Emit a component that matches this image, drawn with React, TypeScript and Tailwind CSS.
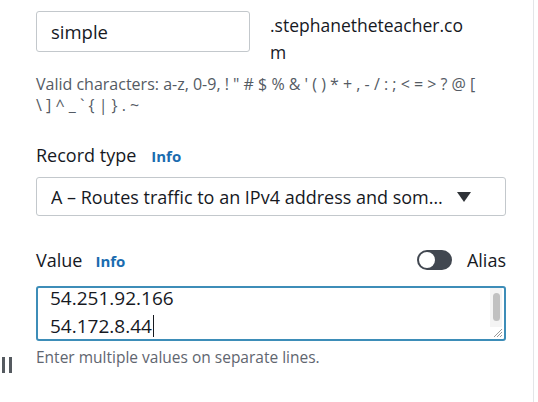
import React from "react";

export default function App() {
  return (
    <div
      className="w-[538px] h-[402px] bg-white overflow-hidden flex text-[#16191f]"
      style={{ fontFamily: "'Open Sans', 'Noto Sans', sans-serif" }}
    >
      <div className="w-[534px] h-full border-r border-[#e3e5e8] flex flex-col">
        <div className="flex flex-1">
          <div className="w-[36px] flex flex-col justify-end pb-[29px] pl-[2px]">
            <div className="flex gap-[4px] h-[16px]">
              <div className="w-[3px] h-full bg-[#555a60]" />
              <div className="w-[3px] h-full bg-[#555a60]" />
            </div>
          </div>
          <div className="w-[470px] flex flex-col pt-[11px]">
            {/* Name row */}
            <div className="flex items-start">
              <div className="w-[214px] h-[41px] border border-[#c3c8cc] rounded-[3px] flex items-center pl-[14px] text-[18.5px] leading-[24px]">
                simple
              </div>
              <div className="ml-[20px] text-[17.5px] leading-[27px] pt-[1px]">
                <div>.stephanetheteacher.co</div>
                <div>m</div>
              </div>
            </div>
            <div className="mt-[8px] text-[16px] leading-[21px] text-[#545b64]">
              <div>Valid characters: a-z, 0-9, ! " # $ % &amp; ' ( ) * + , - / : ; &lt; = &gt; ? @ [</div>
              <div>\ ] ^ _ ` {"{"} | {"}"} . ~</div>
            </div>

            {/* Record type */}
            <div className="mt-[27px] flex items-baseline gap-[15px] leading-[24px]">
              <span className="text-[18px]">Record type</span>
              <span className="text-[15px] font-bold text-[#1a6caf]">Info</span>
            </div>
            <div className="mt-[9px] h-[39px] border border-[#c3c8cc] rounded-[3px] flex items-center pl-[14px] pr-[34px] text-[18px] leading-[24px]">
              <span className="whitespace-nowrap overflow-hidden">A – Routes traffic to an IPv4 address and som…</span>
              <svg className="ml-auto shrink-0" width="14" height="10" viewBox="0 0 14 10">
                <path d="M0 0 L14 0 L7 10 Z" fill="#2f3338" />
              </svg>
            </div>

            {/* Value */}
            <div className="mt-[32px] h-[24px] flex items-center justify-between leading-[24px]">
              <div className="flex items-baseline gap-[13px]">
                <span className="text-[18px]">Value</span>
                <span className="text-[15px] font-bold text-[#1a6caf]">Info</span>
              </div>
              <div className="flex items-center gap-[15px]">
                <div className="w-[35px] h-[20px] rounded-full bg-[#414750] flex items-center pl-[2px]">
                  <div className="w-[16px] h-[16px] rounded-full bg-white" />
                </div>
                <span className="text-[18px]">Alias</span>
              </div>
            </div>
            <div className="mt-[14px] h-[55px] border-2 border-[#3d8db8] rounded-[3px] relative overflow-hidden">
              <div className="pl-[12px] -mt-[4px] text-[19px] leading-[28px]">
                <div>54.251.92.166</div>
                <div className="flex items-center">
                  54.172.8.44
                  <span className="inline-block w-[1px] h-[22px] bg-[#16191f] ml-[1px]" />
                </div>
              </div>
              <div className="absolute right-[2px] top-0 bottom-[12px] w-[12px] bg-[#f4f4f4] flex justify-center pt-[5px]">
                <div className="w-[7px] h-[28px] rounded-full bg-[#c1c1c1]" />
              </div>
              <svg className="absolute right-[1px] bottom-[1px]" width="10" height="10" viewBox="0 0 10 10">
                <path d="M9 1 L1 9 M9 4 L4 9 M9 7 L7 9" stroke="#9a9a9a" strokeWidth="1" />
              </svg>
            </div>
            <div className="mt-[6px] text-[15.5px] leading-[20px] text-[#5f6670]">
              Enter multiple values on separate lines.
            </div>
          </div>
        </div>
      </div>
    </div>
  );
}
